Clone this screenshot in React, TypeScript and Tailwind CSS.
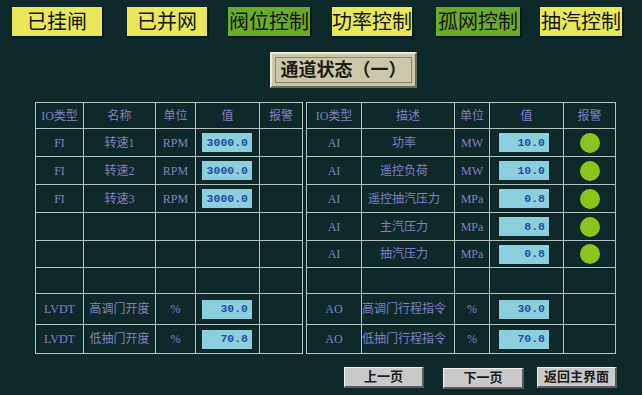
import React from 'react';

type Row = { io: string; name: string; unit: string; value?: string; alarm?: boolean };

const topButtons = [
    { label: '已挂闸', cls: 'ml-[12px] w-[92px] bg-[#e8e85a]' },
    { label: '已并网', cls: 'ml-[23px] w-[82px] bg-[#e8e85a]' },
    { label: '阀位控制', cls: 'ml-[19px] w-[84px] bg-[#6aab2c]' },
    { label: '功率控制', cls: 'ml-[20px] w-[82px] bg-[#e8e85a]' },
    { label: '孤网控制', cls: 'ml-[22px] w-[86px] bg-[#6aab2c]' },
    { label: '抽汽控制', cls: 'ml-[18px] w-[84px] bg-[#e8e85a]' },
];

const leftRows: Row[] = [
    { io: 'FI', name: '转速1', unit: 'RPM', value: '3000.0' },
    { io: 'FI', name: '转速2', unit: 'RPM', value: '3000.0' },
    { io: 'FI', name: '转速3', unit: 'RPM', value: '3000.0' },
    { io: '', name: '', unit: '' },
    { io: '', name: '', unit: '' },
    { io: '', name: '', unit: '' },
    { io: 'LVDT', name: '高调门开度', unit: '%', value: '30.0' },
    { io: 'LVDT', name: '低抽门开度', unit: '%', value: '70.8' },
];

const rightRows: Row[] = [
    { io: 'AI', name: '功率', unit: 'MW', value: '10.0', alarm: true },
    { io: 'AI', name: '遥控负荷', unit: 'MW', value: '10.0', alarm: true },
    { io: 'AI', name: '遥控抽汽压力', unit: 'MPa', value: '0.8', alarm: true },
    { io: 'AI', name: '主汽压力', unit: 'MPa', value: '8.8', alarm: true },
    { io: 'AI', name: '抽汽压力', unit: 'MPa', value: '0.8', alarm: true },
    { io: '', name: '', unit: '' },
    { io: 'AO', name: '高调门行程指令', unit: '%', value: '30.0' },
    { io: 'AO', name: '低抽门行程指令', unit: '%', value: '70.8' },
];

const cell = 'border-r border-b border-[#b4c2c2] flex items-center justify-center text-[#8280c0] text-[12px]';

function ValueBox({ value, pad }: { value?: string; pad: string }) {
    if (!value) return null;
    return (
        <div className={`w-[50px] h-[19px] bg-[#8ccfdc] flex items-center justify-end pr-[4px] text-[#1f4fa6] text-[11.5px] font-bold ${pad}`}
            style={{ fontFamily: '"Liberation Mono", monospace' }}>
            {value}
        </div>
    );
}

function DataTable({ rows, heads, cols, right }: { rows: Row[]; heads: string[]; cols: string; right?: boolean }) {
    return (
        <div className={`grid ${cols} grid-rows-[26px_28px_28px_28px_28px_27px_26px_31px_29px] border-t border-l border-[#b4c2c2]`}>
            {heads.map((h) => (
                <div key={h} className={cell}>{h}</div>
            ))}
            {rows.map((r, i) => (
                <React.Fragment key={i}>
                    <div className={cell}>{r.io}</div>
                    <div className={`${cell} ${right ? 'pr-[8px]' : ''}`}>{r.name}</div>
                    <div className={`${cell} text-[11px]`}>{r.unit}</div>
                    <div className={`${cell} !justify-start`}>
                        <ValueBox value={r.value} pad={right ? 'ml-[9px]' : 'ml-[6px]'} />
                    </div>
                    <div className={cell}>
                        {r.alarm && <div className="w-[20px] h-[20px] rounded-full bg-[#8cc41e]" />}
                    </div>
                </React.Fragment>
            ))}
        </div>
    );
}

export default function App() {
    return (
        <div className="w-[642px] h-[395px] bg-[#0f292b] overflow-hidden flex flex-col"
            style={{ fontFamily: '"Liberation Serif", "Noto Sans CJK SC", serif' }}>

            {/* top mode buttons */}
            <div className="flex pt-[7px]">
                {topButtons.map((b) => (
                    <div key={b.label}
                        className={`h-[31px] flex items-center justify-center text-[20px] text-[#151510] border-b-2 border-r-2 border-[#0a1a12] ${b.cls}`}>
                        {b.label}
                    </div>
                ))}
            </div>

            {/* page title */}
            <div className="mt-[14px] ml-[270px] w-[147px] h-[36px] bg-[#cbc7ab] border-t-2 border-l-2 border-[#ecead8] border-r-2 border-b-2 border-r-[#6d6a58] border-b-[#6d6a58] p-[3px]">
                <div className="w-full h-full border border-[#8a8770] flex items-center justify-center text-[18px] font-bold text-[#1c1c14]">
                    通道状态（一）
                </div>
            </div>

            {/* channel tables */}
            <div className="mt-[14px] ml-[35px] flex gap-[3px]">
                <DataTable rows={leftRows} heads={['IO类型', '名称', '单位', '值', '报警']} cols="grid-cols-[48px_72px_40px_64px_43px]" />
                <DataTable rows={rightRows} heads={['IO类型', '描述', '单位', '值', '报警']} cols="grid-cols-[55px_93px_35px_74px_52px]" right />
            </div>

            {/* navigation */}
            <div className="flex mt-[13px] ml-[344px] text-[13px] font-bold text-[#1c1c1c]">
                <div className="w-[80px] h-[21px] bg-[#c9c9c9] border-t border-l border-[#f0f0f0] border-r-2 border-b-2 border-r-[#5a5a5a] border-b-[#5a5a5a] flex items-center justify-center">上一页</div>
                <div className="ml-[19px] mt-[1px] w-[81px] h-[21px] bg-[#c9c9c9] border-t border-l border-[#f0f0f0] border-r-2 border-b-2 border-r-[#5a5a5a] border-b-[#5a5a5a] flex items-center justify-center">下一页</div>
                <div className="ml-[13px] w-[80px] h-[21px] bg-[#c9c9c9] border-t border-l border-[#f0f0f0] border-r-2 border-b-2 border-r-[#5a5a5a] border-b-[#5a5a5a] flex items-center justify-center">返回主界面</div>
            </div>
        </div>
    );
}
